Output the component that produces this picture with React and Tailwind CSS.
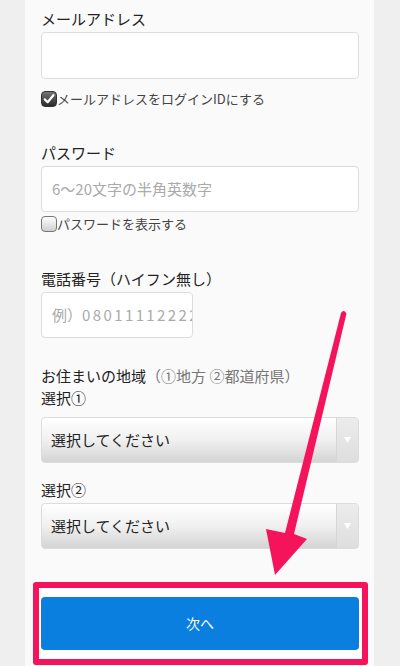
const jp = { fontFamily: '"Noto Sans CJK JP", "Noto Sans", sans-serif' };

const Label = ({ children, className = '' }) => (
  <div className={`h-5 text-[15px] leading-5 text-[#222] ${className}`}>{children}</div>
);

const CheckBox = ({ checked, label, className = '' }) => (
  <div className={`flex h-4 items-center ${className}`}>
    {checked ? (
      <span className="flex h-4 w-4 items-center justify-center rounded-[4px] border border-[#333] bg-gradient-to-b from-[#777] to-[#2a2a2a]">
        <svg width="12" height="12" viewBox="0 0 12 12">
          <path d="M1.8 6.4 L4.6 9.2 L10.4 2.2" fill="none" stroke="white" strokeWidth="2.2" strokeLinecap="round" strokeLinejoin="round" />
        </svg>
      </span>
    ) : (
      <span className="h-4 w-4 rounded-[4px] border border-[#777] bg-gradient-to-b from-white to-[#cfcfcf]" />
    )}
    <span className="text-[13px] leading-4 text-[#444]">{label}</span>
  </div>
);

const Select = ({ className = '' }) => (
  <div className={`flex h-[46px] w-[318px] overflow-hidden rounded-[4px] border border-[#dcdcdc] bg-gradient-to-b from-white via-[#f0f0f0] to-[#d4d4d4] ${className}`}>
    <div className="flex flex-1 items-center pl-[9px] text-[15px] text-[#222]">選択してください</div>
    <div className="flex w-[22px] items-center justify-center border-l border-[#d6d6d6] bg-gradient-to-b from-[#ececec] to-[#dedede]">
      <svg width="7" height="6" viewBox="0 0 7 6">
        <path d="M0 0 H7 L3.5 6 Z" fill="white" />
      </svg>
    </div>
  </div>
);

export default function App() {
  return (
    <div className="relative h-[666px] w-[400px] overflow-hidden bg-[#efefef]" style={jp}>
      <div className="ml-[25px] h-full w-[349px] bg-[#fafafa] pl-4">
        <Label className="pt-[9px] h-[29px]">メールアドレス</Label>
        <div className="mt-[3px] h-[47px] w-[318px] rounded-[4px] border border-[#dddddd] bg-white" />
        <CheckBox checked label="メールアドレスをログインIDにする" className="mt-[12px]" />

        <Label className="mt-[36px]">パスワード</Label>
        <div className="mt-[3px] flex h-[46px] w-[318px] items-center rounded-[4px] border border-[#dddddd] bg-white pl-[10px] text-[15px] text-[#aaaaaa]">
          6〜20文字の半角英数字
        </div>
        <CheckBox label="パスワードを表示する" className="mt-[4px]" />

        <Label className="mt-[37px]">電話番号（ハイフン無し）</Label>
        <div className="mt-[3px] flex h-[46px] w-[152px] items-center overflow-hidden whitespace-nowrap rounded-[4px] border border-[#dddddd] bg-white pl-[10px] text-[15px] text-[#aaaaaa]">
          例）<span className="tracking-[2.4px]">08011112222</span>
        </div>

        <Label className="mt-[28px]">
          お住まいの地域<span className="text-[#777]">（①地方 ②都道府県）</span>
        </Label>
        <Label className="mt-[2px]">選択①</Label>
        <Select className="mt-[9px]" />
        <Label className="mt-[17px]">選択②</Label>
        <Select className="mt-[3px]" />

        <div className="ml-[-8px] mt-[33px] h-[83px] w-[335px] rounded-[3px] border-[6px] border-[#f5145c] bg-white pl-[2px] pt-[9px]">
          <div className="flex h-[53px] w-[318px] items-center justify-center rounded-[4px] bg-[#0a7fdf] text-[14px] text-white">
            次へ
          </div>
        </div>
      </div>

      <svg className="pointer-events-none absolute left-0 top-0" width="400" height="666" viewBox="0 0 400 666">
        <path
          d="M341 313 Q343.5 309 346.5 313.5 L294 534 L307 539 L275 575 L266 529 L285 533 Z"
          fill="#f5145c"
        />
      </svg>
    </div>
  );
}
